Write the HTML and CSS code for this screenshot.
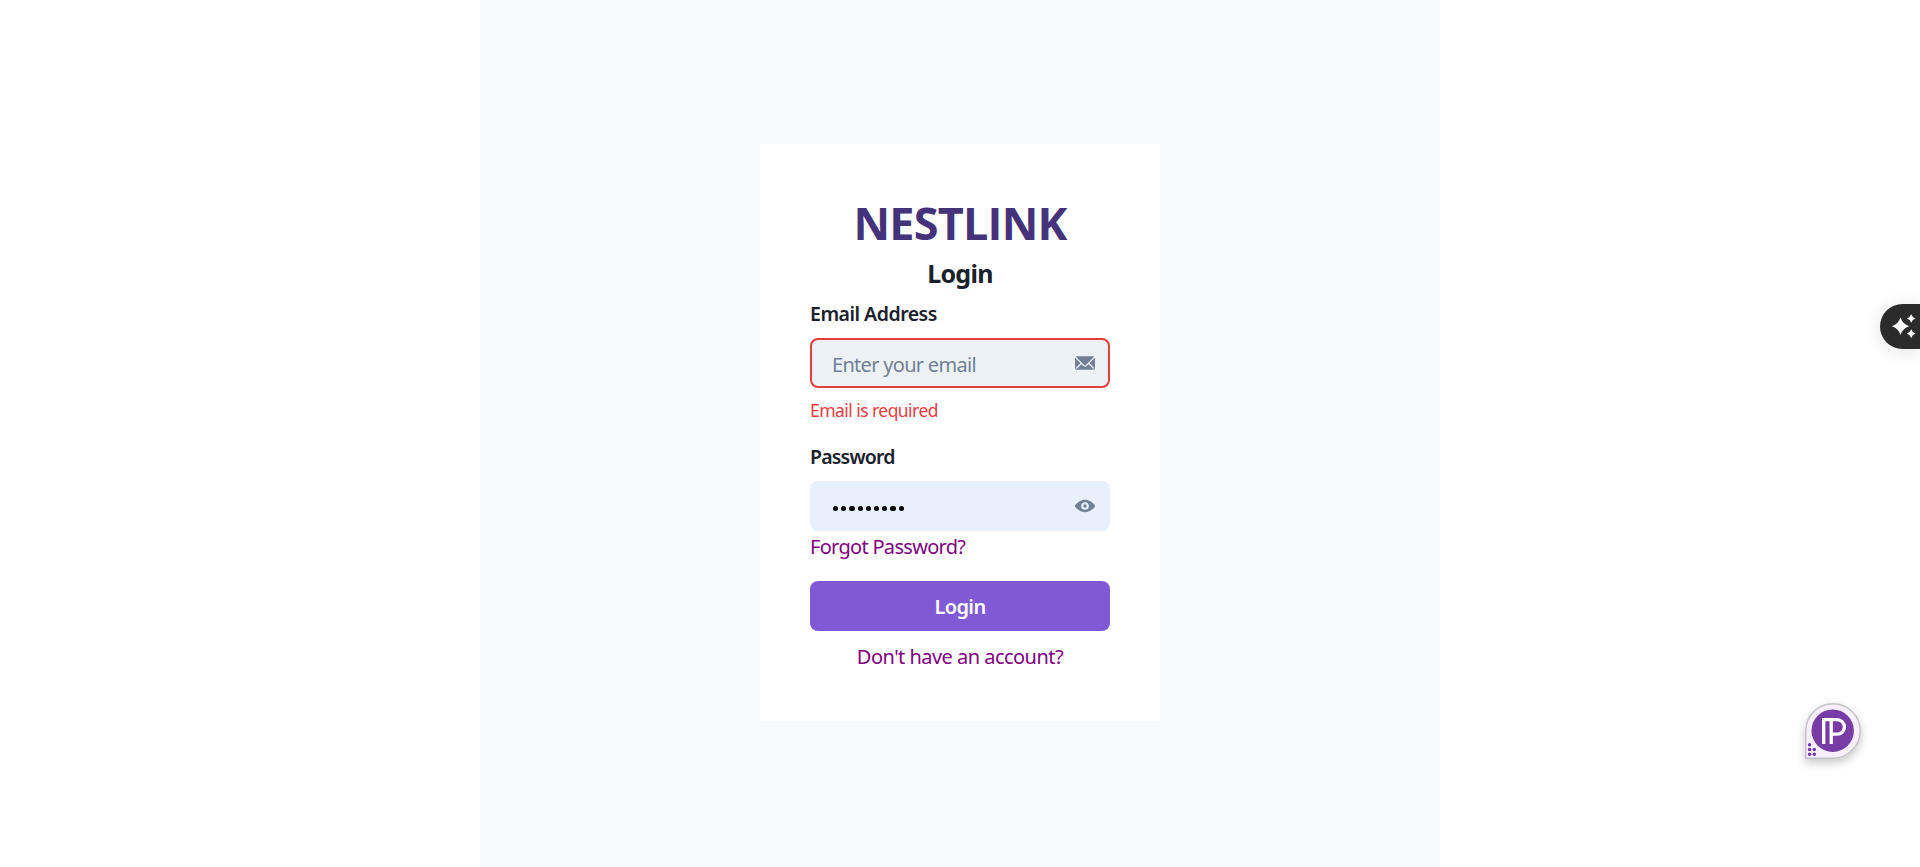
FILE: index.html
```html
<!DOCTYPE html>
<html lang="en">
<head>
<meta charset="utf-8">
<title>Nestlink</title>
<link rel="stylesheet" href="styles.css">
</head>
<body>
<main class="page">
  <form class="card">
    <h1 class="brand"><span>NESTLINK</span></h1>
    <h2 class="title"><span>Login</span></h2>
    <label class="label label-email"><span>Email Address</span></label>
    <div class="field field-invalid">
      <span class="placeholder">Enter your email</span>
      <svg class="icon" viewBox="0 0 24 24"><path fill="currentColor" d="M11.114 14.556a1.252 1.252 0 0 0 1.768 0L22.568 4.87a.5.5 0 0 0-.281-.849A1.966 1.966 0 0 0 22 4H2a1.966 1.966 0 0 0-.289.021.5.5 0 0 0-.281.849ZM23.888 5.832a.182.182 0 0 0-.2.039l-6.2 6.2a.251.251 0 0 0 0 .354l5.043 5.043a.75.75 0 1 1-1.06 1.061l-5.043-5.043a.25.25 0 0 0-.354 0l-2.129 2.129a2.75 2.75 0 0 1-3.888 0l-2.13-2.129a.25.25 0 0 0-.354 0l-5.043 5.043a.75.75 0 1 1-1.06-1.061l5.043-5.043a.251.251 0 0 0 0-.354l-6.2-6.2a.18.18 0 0 0-.2-.039A.182.182 0 0 0 0 6v12a2 2 0 0 0 2 2h20a2 2 0 0 0 2-2V6a.181.181 0 0 0-.112-.168Z"/></svg>
    </div>
    <p class="error">Email is required</p>
    <label class="label label-password"><span>Password</span></label>
    <div class="field field-filled">
      <span class="dots"><i></i><i></i><i></i><i></i><i></i><i></i><i></i><i></i><i></i></span>
      <svg class="icon" viewBox="0 0 24 24"><path fill="currentColor" d="M23.432 10.524C20.787 7.614 16.4 4.538 12 4.6 7.6 4.537 3.213 7.615.568 10.524a2.211 2.211 0 0 0 0 2.948C3.182 16.351 7.507 19.4 11.839 19.4h.308c4.347 0 8.671-3.049 11.288-5.929a2.21 2.21 0 0 0-.003-2.947ZM7.4 12a4.6 4.6 0 1 1 4.6 4.6A4.6 4.6 0 0 1 7.4 12Z"/><circle cx="12" cy="12" r="2"/></svg>
    </div>
    <a class="link forgot">Forgot Password?</a>
    <button class="submit" type="button"><span>Login</span></button>
    <a class="link signup"><span>Don't have an account?</span></a>
  </form>
</main>
<div class="assistant">
  <svg viewBox="0 0 24 24"><path fill="#fff" d="M8.5 3.6Q10.6 10.2 17.2 12.3Q10.6 14.4 8.5 21Q6.4 14.4-.2 12.3Q6.4 10.2 8.5 3.6ZM19.2.2Q20.3 3.4 23.5 4.5Q20.3 5.6 19.2 8.8Q18.1 5.6 14.9 4.5Q18.1 3.4 19.2.2ZM19.2 15.3Q20.3 18.5 23.5 19.6Q20.3 20.7 19.2 23.9Q18.1 20.7 14.9 19.6Q18.1 18.5 19.2 15.3Z"/></svg>
</div>
<div class="widget">
  <svg viewBox="0 0 56 56">
    <path d="M.75 55.25V28A27.25 27.25 0 1 1 28 55.25Z" fill="#f8effc" stroke="#c5c0c8" stroke-width="1.5"/>
    <circle cx="27.7" cy="27.7" r="21.2" fill="#773ca5"/>
    <path d="M18.7 41V16.7H32.2A6.7 6.7 0 0 1 32.2 31.2H26.2M26.2 16.7V41" fill="none" stroke="#fff" stroke-width="3.3"/>
    <g fill="#6c35b1"><circle cx="4.6" cy="41.8" r="1.7"/><circle cx="4.6" cy="46.5" r="1.7"/><circle cx="9.3" cy="46.5" r="1.7"/><circle cx="4.6" cy="51.2" r="1.7"/><circle cx="9.3" cy="51.2" r="1.7"/></g>
  </svg>
</div>
</body>
</html>
```
FILE: styles.css
```css
* { box-sizing: border-box; margin: 0; }
body {
  background: #fff;
  color: #1a202c;
  font-family: "Noto Sans", "Open Sans", sans-serif;
  font-size: 20px;
  line-height: 30px;
  overflow: hidden;
}
.page {
  display: flex;
  justify-content: center;
  align-items: flex-start;
  width: 960px;
  height: 867px;
  margin: 0 auto;
  padding-top: 144px;
  background: #f6fafd;
}
.card {
  display: flex;
  flex-direction: column;
  width: 400px;
  height: 577px;
  padding: 50px;
  background: #fff;
}
.brand {
  color: #44337a;
  font-family: "Open Sans", "Noto Sans", sans-serif;
  font-size: 45px;
  font-weight: 700;
  line-height: 57px;
  text-align: center;
  letter-spacing: -0.8px;
}
.title {
  font-size: 25px;
  font-weight: 700;
  line-height: 45px;
  text-align: center;
  letter-spacing: -0.7px;
}
.label { font-weight: 600; font-size: 19.5px; margin: 3px 0 9px; letter-spacing: -0.5px; }
.label-password { margin-top: 23px; letter-spacing: -0.8px; }
.field {
  display: flex;
  align-items: center;
  justify-content: space-between;
  flex: none;
  height: 50px;
  padding: 0 13px 0 20px;
  border: 2px solid transparent;
  border-radius: 8px;
}
.field-invalid { background: #edf2f7; border-color: #e53e3e; }
.field-filled { background: #e8f0fe; border-color: #e8f0fe; }
.placeholder { color: #718096; padding-top: 3px; letter-spacing: -0.7px; }
.icon { width: 20px; height: 20px; color: #718096; fill: currentColor; }
.dots { display: flex; gap: 2.9px; padding: 5px 0 0 1px; }
.dots i { width: 5.3px; height: 5.3px; border-radius: 50%; background: #000; }
.error {
  color: #e53e3e;
  font-size: 17.5px;
  line-height: 18px;
  margin-top: 13px;
  letter-spacing: -0.55px;
}
.link { color: #800080; letter-spacing: -0.7px; }
.forgot { padding-top: 1px; }
.submit {
  flex: none;
  height: 50px;
  margin-top: 19px;
  padding: 2px 0 0;
  border: 0;
  border-radius: 8px;
  background: #805ad5;
  color: #fff;
  font: 600 20px/30px "Noto Sans", "Open Sans", sans-serif;
  letter-spacing: -0.6px;
}
.signup { margin-top: 11px; text-align: center; letter-spacing: -0.53px; }
.assistant {
  position: absolute;
  top: 304px;
  right: 0;
  width: 40px;
  height: 45px;
  padding: 10px 0 0 12px;
  border-radius: 23px 0 0 23px;
  background: #2b2b2b;
  box-shadow: 0 2px 18px rgba(0, 0, 0, .12);
}
.assistant svg { display: block; width: 24px; height: 24px; }
.widget {
  position: absolute;
  left: 1805px;
  top: 703px;
  width: 56px;
  height: 56px;
  border-radius: 50% 50% 50% 0;
  box-shadow: 0 4px 10px rgba(0, 0, 0, .22);
}
.widget svg { display: block; }
```
